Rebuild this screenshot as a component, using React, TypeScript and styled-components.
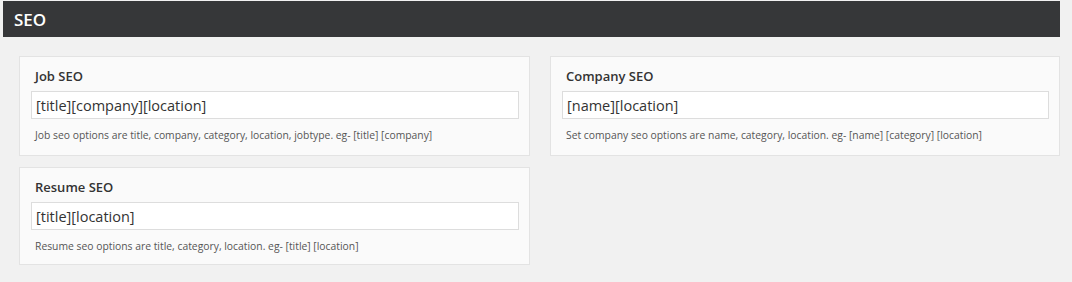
import React from "react";
import styled, { createGlobalStyle } from "styled-components";

const Global = createGlobalStyle`
  html, body { margin: 0; padding: 0; background: #f1f1f1; }
  body { font-family: "Open Sans", "Noto Sans", sans-serif; }
  * { box-sizing: border-box; }
`;

const Page = styled.div`
  padding: 1px 12px 0 3px;
  width: 1072px;
  height: 282px;
`;

const Header = styled.div`
  background: #363739;
  color: #ffffff;
  height: 36px;
  display: flex;
  align-items: center;
  padding-left: 11px;
  font-size: 17px;
  font-weight: 600;
`;

const Grid = styled.div`
  display: grid;
  grid-template-columns: 511px 510px;
  column-gap: 20px;
  row-gap: 11px;
  padding: 19px 0 0 16px;
`;

const Card = styled.div<{ $h: number }>`
  background: #fafafa;
  border: 1px solid #e3e3e3;
  padding: 8px 10px 0 11px;
  height: ${(p) => p.$h}px;
`;

const Title = styled.div`
  font-size: 13px;
  font-weight: 600;
  color: #333;
  line-height: 18px;
  padding-left: 4px;
  margin-top: 2px;
`;

const Input = styled.input`
  display: block;
  width: 100%;
  height: 28px;
  margin-top: 6px;
  border: 1px solid #dddddd;
  background: #ffffff;
  font-family: "Open Sans", "Noto Sans", sans-serif;
  font-size: 14.5px;
  color: #333;
  padding: 0 4px;
  outline: none;
`;

const Help = styled.div`
  font-size: 10.35px;
  color: #555;
  margin-top: 9px;
  padding-left: 4px;
  line-height: 14px;
`;

type Field = { title: string; value: string; help: string; h: number };

const Box = ({ title, value, help, h }: Field) => (
  <Card $h={h}>
    <Title>{title}</Title>
    <Input defaultValue={value} />
    <Help>{help}</Help>
  </Card>
);

export default function App() {
  return (
    <Page>
      <Global />
      <Header>SEO</Header>
      <Grid>
        <Box
          h={100}
          title="Job SEO"
          value="[title][company][location]"
          help="Job seo options are title, company, category, location, jobtype. eg- [title] [company]"
        />
        <Box
          h={100}
          title="Company SEO"
          value="[name][location]"
          help="Set company seo options are name, category, location. eg- [name] [category] [location]"
        />
        <Box
          h={98}
          title="Resume SEO"
          value="[title][location]"
          help="Resume seo options are title, category, location. eg- [title] [location]"
        />
      </Grid>
    </Page>
  );
}
